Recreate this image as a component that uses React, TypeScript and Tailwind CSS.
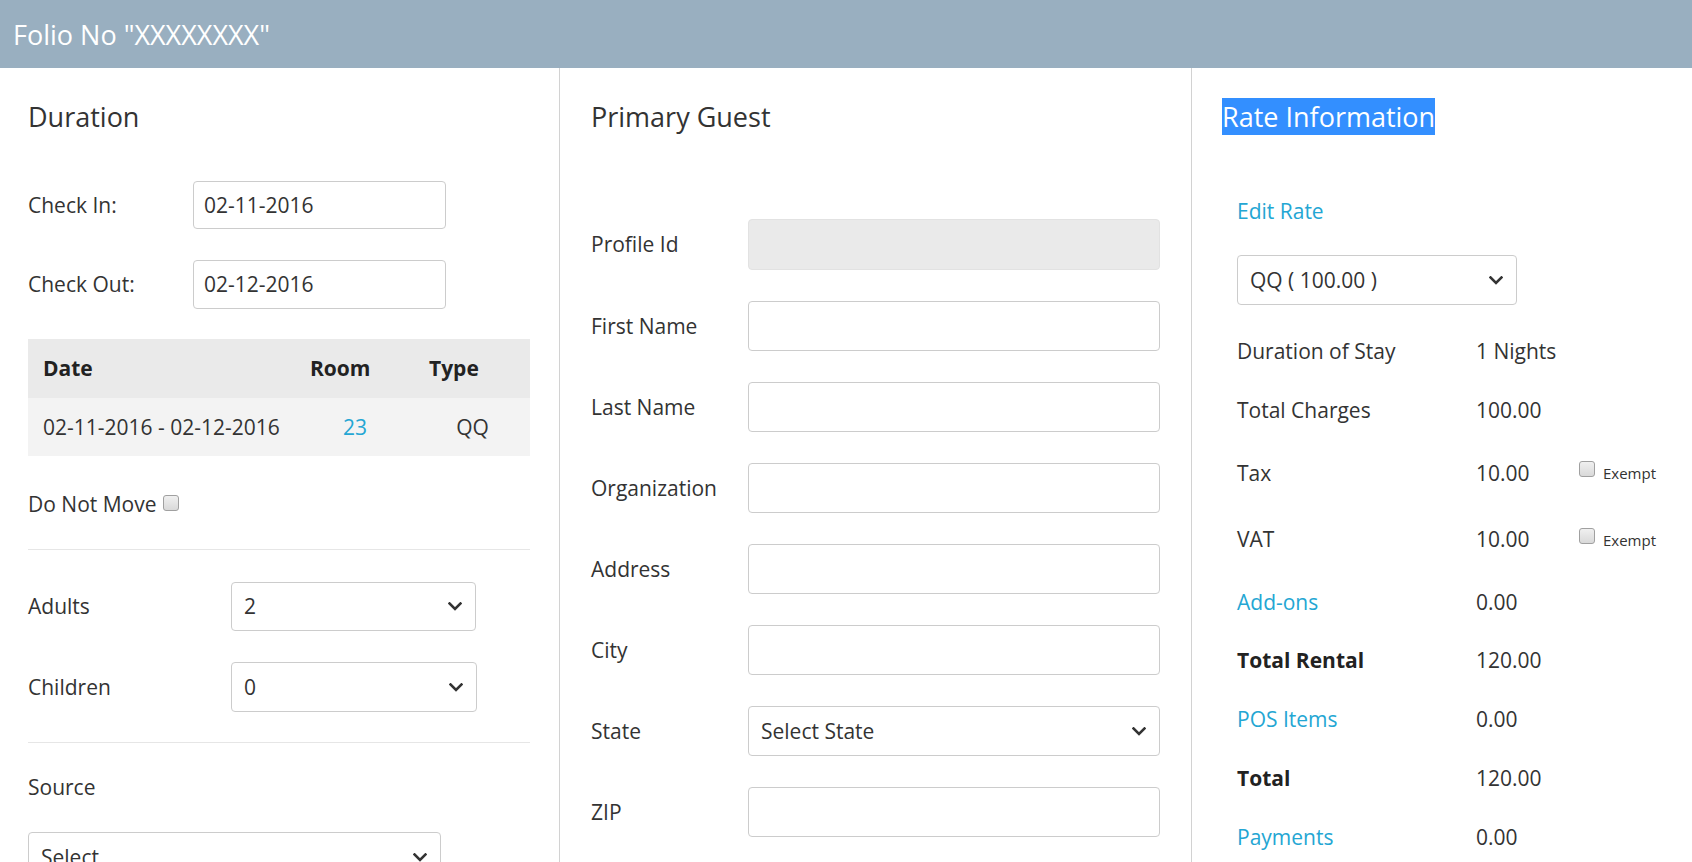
import React from "react";

const Chevron = () => (
  <svg width="14" height="9" viewBox="0 0 14 9" fill="none">
    <path d="M1.5 1.5 L7 7 L12.5 1.5" stroke="#333" strokeWidth="2.6" strokeLinecap="square" />
  </svg>
);

const Check = ({ className = "" }: { className?: string }) => (
  <span className={"inline-block w-[16px] h-[16px] rounded-[3px] border border-[#a0a0a0] bg-gradient-to-b from-[#f0f0f0] to-[#d9d9d9] " + className} />
);

const SelectBox = ({ value, className = "" }: { value: string; className?: string }) => (
  <div className={"flex items-center justify-between border border-[#cccccc] rounded-[4px] bg-white pl-[12px] pr-[13px] " + className}>
    <span>{value}</span>
    <Chevron />
  </div>
);

const TextBox = ({ value = "", className = "" }: { value?: string; className?: string }) => (
  <div className={"flex items-center border border-[#cccccc] rounded-[4px] bg-white px-[10px] " + className}>
    {value}
  </div>
);

const guestFields = ["First Name", "Last Name", "Organization", "Address", "City"];

export default function App() {
  return (
    <div
      className="w-[1692px] h-[862px] overflow-hidden bg-white text-[#333333] text-[21px] leading-[29px]"
      style={{ fontFamily: '"Open Sans", "Noto Sans", sans-serif' }}
    >
      <div className="h-[68px] bg-[#99afc0] flex items-center pl-[13px] text-white text-[27px]">
        Folio No "XXXXXXXX"
      </div>
      <div className="flex h-[794px]">
        {/* Column 1 */}
        <div className="w-[560px] border-r border-[#d2d2d2] pl-[28px] pr-[29px] pt-[31px]">
          <h3 className="text-[27px] leading-[36px]">Duration</h3>
          <div className="mt-[46px] flex items-center">
            <span className="w-[165px]">Check In:</span>
            <TextBox value="02-11-2016" className="w-[253px] h-[48px]" />
          </div>
          <div className="mt-[31px] flex items-center">
            <span className="w-[165px]">Check Out:</span>
            <TextBox value="02-12-2016" className="w-[253px] h-[49px]" />
          </div>
          <div className="mt-[30px] w-[502px]">
            <div className="grid grid-cols-[267px_120px_115px] h-[59px] items-center bg-[#eaeaea] font-bold text-[#222]">
              <span className="pl-[15px]">Date</span>
              <span className="pl-[15px]">Room</span>
              <span className="pl-[14px]">Type</span>
            </div>
            <div className="grid grid-cols-[267px_120px_115px] h-[58px] items-center bg-[#f3f3f3]">
              <span className="pl-[15px]">02-11-2016 - 02-12-2016</span>
              <span className="text-center text-[#24a6d3]">23</span>
              <span className="text-center">QQ</span>
            </div>
          </div>
          <div className="mt-[34px] flex items-start h-[29px]">
            <span>Do Not Move</span>
            <Check className="ml-[6px] mt-[5px]" />
          </div>
          <div className="mt-[30px] border-t border-[#e6e6e6]" />
          <div className="mt-[32px] flex items-center">
            <span className="w-[203px]">Adults</span>
            <SelectBox value="2" className="w-[245px] h-[49px]" />
          </div>
          <div className="mt-[31px] flex items-center">
            <span className="w-[203px]">Children</span>
            <SelectBox value="0" className="w-[246px] h-[50px]" />
          </div>
          <div className="mt-[30px] border-t border-[#e6e6e6]" />
          <div className="mt-[30px]">Source</div>
          <SelectBox value="Select" className="mt-[30px] w-[413px] h-[50px]" />
        </div>

        {/* Column 2 */}
        <div className="w-[632px] border-r border-[#d2d2d2] pl-[31px] pr-[31px] pt-[31px]">
          <h3 className="text-[27px] leading-[36px]">Primary Guest</h3>
          <div className="mt-[84px] flex flex-col gap-[31px]">
            <div className="flex items-center">
              <span className="w-[157px]">Profile Id</span>
              <div className="w-[412px] h-[51px] rounded-[4px] border border-[#e2e2e2] bg-[#eaeaea]" />
            </div>
            {guestFields.map((f) => (
              <div key={f} className="flex items-center">
                <span className="w-[157px]">{f}</span>
                <TextBox className="w-[412px] h-[50px]" />
              </div>
            ))}
            <div className="flex items-center">
              <span className="w-[157px]">State</span>
              <SelectBox value="Select State" className="w-[412px] h-[50px]" />
            </div>
            <div className="flex items-center">
              <span className="w-[157px]">ZIP</span>
              <TextBox className="w-[412px] h-[50px]" />
            </div>
          </div>
        </div>

        {/* Column 3 */}
        <div className="flex-1 pl-[30px] pt-[31px]">
          <h3 className="text-[27px] leading-[36px]">
            <span className="bg-[#338fff] text-white">Rate Information</span>
          </h3>
          <div className="pl-[15px]">
            <div className="mt-[62px] text-[#24a6d3]">Edit Rate</div>
            <SelectBox value="QQ ( 100.00 )" className="mt-[29px] w-[280px] h-[50px]" />
            <div className="mt-[17px]">
              <div className="flex items-center h-[59px]">
                <span className="w-[239px]">Duration of Stay</span>
                <span>1 Nights</span>
              </div>
              <div className="flex items-center h-[59px]">
                <span className="w-[239px]">Total Charges</span>
                <span>100.00</span>
              </div>
              <div className="flex items-center h-[66px]">
                <span className="w-[239px]">Tax</span>
                <span className="w-[103px]">10.00</span>
                <Check className="mb-[8px]" />
                <span className="ml-[8px] text-[15px] leading-[20px] text-[#333]">Exempt</span>
              </div>
              <div className="flex items-center h-[67px]">
                <span className="w-[239px]">VAT</span>
                <span className="w-[103px]">10.00</span>
                <Check className="mb-[8px]" />
                <span className="ml-[8px] text-[15px] leading-[20px] text-[#333]">Exempt</span>
              </div>
              <div className="flex items-center h-[58px]">
                <span className="w-[239px] text-[#24a6d3]">Add-ons</span>
                <span>0.00</span>
              </div>
              <div className="flex items-center h-[59px]">
                <span className="w-[239px] font-bold text-[#222]">Total Rental</span>
                <span>120.00</span>
              </div>
              <div className="flex items-center h-[59px]">
                <span className="w-[239px] text-[#24a6d3]">POS Items</span>
                <span>0.00</span>
              </div>
              <div className="flex items-center h-[59px]">
                <span className="w-[239px] font-bold text-[#222]">Total</span>
                <span>120.00</span>
              </div>
              <div className="flex items-center h-[59px]">
                <span className="w-[239px] text-[#24a6d3]">Payments</span>
                <span>0.00</span>
              </div>
            </div>
          </div>
        </div>
      </div>
    </div>
  );
}
